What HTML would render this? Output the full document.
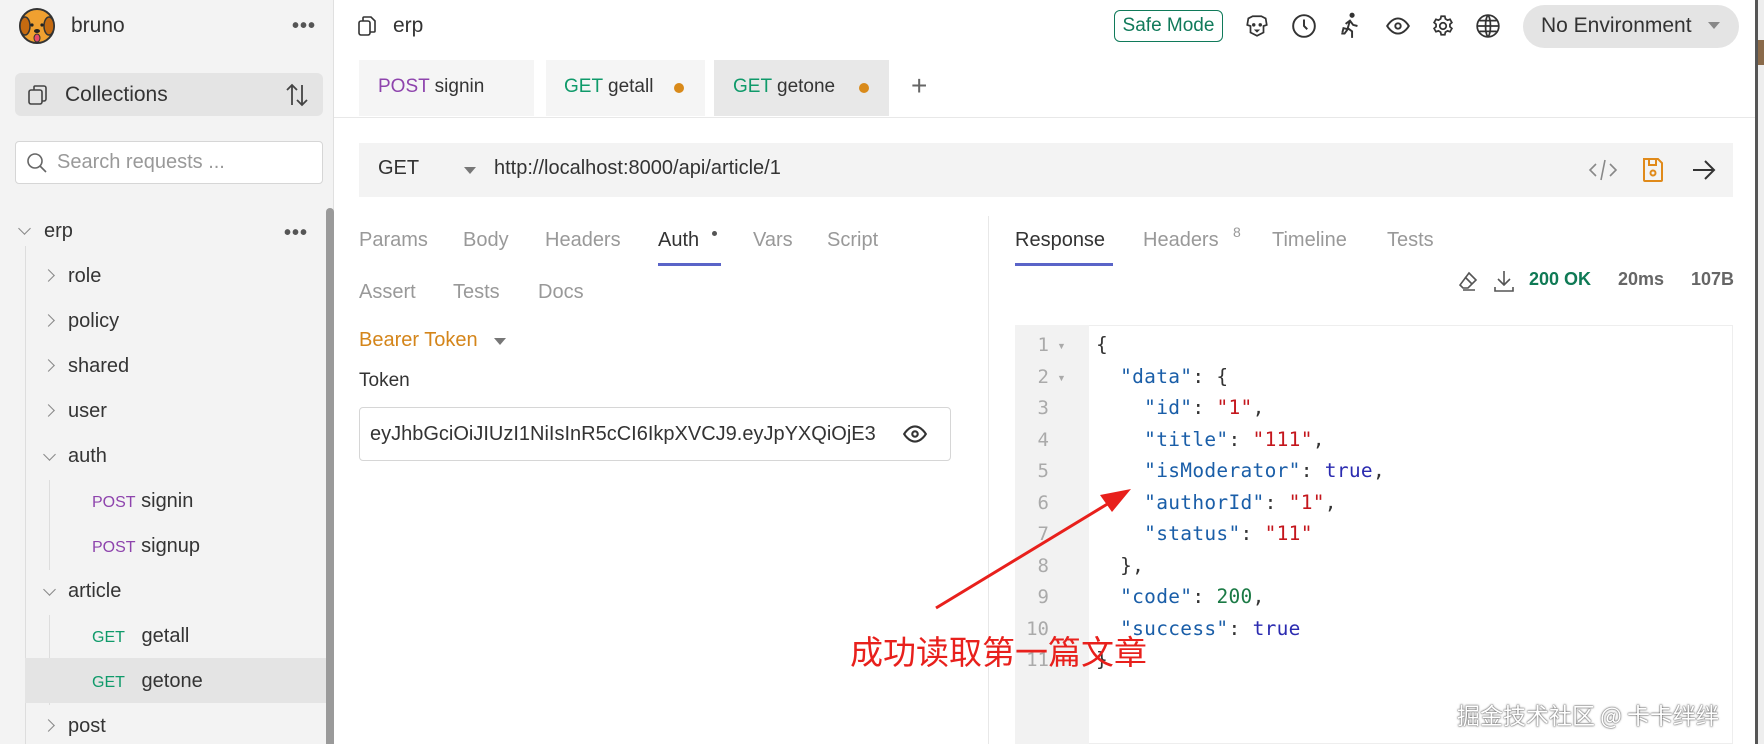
<!DOCTYPE html>
<html><head><meta charset="utf-8"><style>
*{box-sizing:border-box;margin:0;padding:0}
body{width:1764px;height:744px;overflow:hidden;background:#fff;font-family:"Liberation Sans","Noto Sans CJK SC",sans-serif;color:#343434;position:relative}
.a{position:absolute;white-space:nowrap}
.sb{position:absolute;left:0;top:0;width:334px;height:744px;background:#f3f3f3;border-right:1px solid #e0e0e0}
.row{position:absolute;font-size:20px;line-height:24px}
.chev{position:absolute;width:9px;height:9px;border-right:1.5px solid #888;border-bottom:1.5px solid #888}
.post{color:#8e44ad;font-size:16px}
.get{color:#0f9a6a;font-size:16px}
.tab{font-size:20px;color:#999;line-height:24px}
.ic{position:absolute}
.cl{position:absolute;left:1096px;font-family:"DejaVu Sans Mono","Liberation Mono",monospace;font-size:19.5px;line-height:24px;color:#333;letter-spacing:0.3px;white-space:pre;z-index:2}
.k{color:#1a5ea8}.s{color:#c4161c}.b{color:#2b2bb0}.n{color:#1b7a45}
.ln{position:absolute;left:1025px;width:24px;text-align:right;font-family:"DejaVu Sans Mono",monospace;font-size:19px;line-height:24px;color:#aaa;z-index:2}
</style></head><body>
<div class="sb"></div>
<svg class="ic" style="left:17px;top:6px" width="40" height="40" viewBox="0 0 40 40"><circle cx="20" cy="20" r="17" fill="#f0a030" stroke="#333" stroke-width="2"/><ellipse cx="8" cy="20" rx="5" ry="9" fill="#c56a10" stroke="#333" stroke-width="1.5"/><ellipse cx="32" cy="20" rx="5" ry="9" fill="#c56a10" stroke="#333" stroke-width="1.5"/><circle cx="15" cy="19" r="1.6" fill="#222"/><circle cx="25" cy="19" r="1.6" fill="#222"/><ellipse cx="20" cy="25" rx="3" ry="2" fill="#222"/><ellipse cx="20" cy="32" rx="3" ry="4" fill="#e84a6a" stroke="#333" stroke-width="1"/></svg>
<div class="a" style="left:71px;top:14px;font-size:21px">bruno</div>
<div class="a" style="left:292px;top:15px;font-size:20px;letter-spacing:1px;color:#555;font-weight:bold">•••</div>
<div class="a" style="left:15px;top:73px;width:308px;height:43px;background:#e4e4e4;border-radius:6px"></div>
<svg class="ic" style="left:26px;top:83px" width="24" height="24" viewBox="0 0 24 24" fill="none" stroke="#444" stroke-width="1.6"><rect x="3" y="7" width="13" height="14" rx="2"/><path d="M8 7V4a1 1 0 0 1 1-1h9a2 2 0 0 1 2 2v11a2 2 0 0 1-2 2h-2"/></svg>
<div class="a" style="left:65px;top:83px;font-size:21px">Collections</div>
<svg class="ic" style="left:285px;top:82px" width="24" height="26" viewBox="0 0 24 26" fill="none" stroke="#444" stroke-width="1.8"><path d="M7 23V3M2 8l5-5 5 5M17 3v20M12 18l5 5 5-5"/></svg>
<div class="a" style="left:15px;top:141px;width:308px;height:43px;background:#fff;border:1px solid #d6d6d6;border-radius:4px"></div>
<svg class="ic" style="left:26px;top:152px" width="22" height="22" viewBox="0 0 22 22" fill="none" stroke="#666" stroke-width="1.6"><circle cx="9" cy="9" r="7"/><path d="M14 14l6 6"/></svg>
<div class="a" style="left:57px;top:151px;font-size:20px;color:#999">Search requests ...</div>
<div class="chev" style="left:20px;top:224px;transform:rotate(45deg)"></div>
<div class="row" style="left:44px;top:219px">erp</div>
<div class="a" style="left:284px;top:222px;font-size:20px;letter-spacing:1px;color:#555;font-weight:bold">•••</div>
<div class="a" style="left:25px;top:246px;width:1px;height:498px;background:#ddd"></div>
<div class="a" style="left:49px;top:480px;width:1px;height:90px;background:#ddd"></div>
<div class="a" style="left:49px;top:615px;width:1px;height:90px;background:#ddd"></div>
<div class="a" style="left:25px;top:658px;width:301px;height:45px;background:#e4e4e4"></div>
<div class="chev" style="left:44px;top:271px;transform:rotate(-45deg)"></div><div class="row" style="left:68px;top:264px">role</div>
<div class="chev" style="left:44px;top:316px;transform:rotate(-45deg)"></div><div class="row" style="left:68px;top:309px">policy</div>
<div class="chev" style="left:44px;top:361px;transform:rotate(-45deg)"></div><div class="row" style="left:68px;top:354px">shared</div>
<div class="chev" style="left:44px;top:406px;transform:rotate(-45deg)"></div><div class="row" style="left:68px;top:399px">user</div>
<div class="chev" style="left:45px;top:450px;transform:rotate(45deg)"></div><div class="row" style="left:68px;top:444px">auth</div>
<div class="row" style="left:92px;top:489px"><span class="post">POST</span> signin</div>
<div class="row" style="left:92px;top:534px"><span class="post">POST</span> signup</div>
<div class="chev" style="left:45px;top:585px;transform:rotate(45deg)"></div><div class="row" style="left:68px;top:579px">article</div>
<div class="row" style="left:92px;top:624px"><span class="get">GET</span>&nbsp;&nbsp; getall</div>
<div class="row" style="left:92px;top:669px"><span class="get">GET</span>&nbsp;&nbsp; getone</div>
<div class="chev" style="left:44px;top:721px;transform:rotate(-45deg)"></div><div class="row" style="left:68px;top:714px">post</div>
<div class="a" style="left:326px;top:208px;width:8px;height:536px;background:#9a9a9a;border-radius:4px 4px 0 0"></div>
<svg class="ic" style="left:356px;top:14px" width="22" height="24" viewBox="0 0 22 24" fill="none" stroke="#333" stroke-width="1.6"><rect x="3" y="7" width="11" height="14" rx="2"/><path d="M7 7V4a1 1 0 0 1 1-1h7l4 4v10a1 1 0 0 1-1 1h-4"/></svg>
<div class="a" style="left:393px;top:14px;font-size:21px;color:#333">erp</div>
<div class="a" style="left:1114px;top:10px;width:109px;height:32px;border:1.5px solid #107a5a;border-radius:6px;color:#107a5a;font-size:19px;line-height:29px;text-align:center">Safe Mode</div>
<svg class="ic" style="left:1244px;top:13px" width="26" height="26" viewBox="0 0 24 24" fill="none" stroke="#333" stroke-width="1.6"><path d="M4 5l4-2h8l4 2 1 6-3 1v6l-6 3-6-3v-6l-3-1z"/><circle cx="9" cy="11" r=".8" fill="#333"/><circle cx="15" cy="11" r=".8" fill="#333"/><path d="M11 16h2l-1 1z"/></svg>
<svg class="ic" style="left:1291px;top:13px" width="26" height="26" viewBox="0 0 24 24" fill="none" stroke="#333" stroke-width="1.8"><circle cx="12" cy="12" r="10"/><path d="M12 6v6l3 3"/></svg>
<svg class="ic" style="left:1338px;top:12px" width="26" height="28" viewBox="0 0 24 26" fill="none" stroke="#333" stroke-width="1.8"><circle cx="13" cy="3" r="1.5" fill="#333"/><path d="M4 19l1-4 4 1M7 11l4-3 3 4 4 1M11 8l-2 7 4 3v6M9 16l-3 4H3"/></svg>
<svg class="ic" style="left:1385px;top:13px" width="26" height="26" viewBox="0 0 24 24" fill="none" stroke="#333" stroke-width="1.8"><path d="M2 12s4-7 10-7 10 7 10 7-4 7-10 7S2 12 2 12z"/><circle cx="12" cy="12" r="2.5"/></svg>
<svg class="ic" style="left:1430px;top:13px" width="26" height="26" viewBox="0 0 24 24" fill="none" stroke="#333" stroke-width="1.6"><circle cx="12" cy="12" r="3"/><path d="M10.3 3h3.4l.5 2.4 2 1.2 2.3-.8 1.7 3-1.8 1.6v2.3l1.8 1.6-1.7 3-2.3-.8-2 1.2-.5 2.4h-3.4l-.5-2.4-2-1.2-2.3.8-1.7-3 1.8-1.6v-2.3L3.8 8.8l1.7-3 2.3.8 2-1.2z"/></svg>
<svg class="ic" style="left:1475px;top:13px" width="26" height="26" viewBox="0 0 24 24" fill="none" stroke="#333" stroke-width="1.6"><circle cx="12" cy="12" r="10"/><path d="M2 12h20M12 2c-3 3-3 17 0 20M12 2c3 3 3 17 0 20M4 7h16M4 17h16"/></svg>
<div class="a" style="left:1523px;top:5px;width:216px;height:43px;background:#e4e4e4;border-radius:22px"></div>
<div class="a" style="left:1541px;top:14px;font-size:21px;color:#333">No Environment</div>
<div class="a" style="left:1708px;top:22px;width:0;height:0;border-left:6px solid transparent;border-right:6px solid transparent;border-top:7px solid #888"></div>
<div class="a" style="left:359px;top:60px;width:175px;height:56px;background:#f5f5f5"></div>
<div class="a" style="left:546px;top:60px;width:159px;height:56px;background:#f5f5f5"></div>
<div class="a" style="left:714px;top:60px;width:175px;height:56px;background:#e8e8e8"></div>
<div class="a" style="left:378px;top:76px;font-size:19px"><span style="color:#8e44ad">POST</span> signin</div>
<div class="a" style="left:564px;top:76px;font-size:19px"><span style="color:#0f9a6a">GET</span> getall</div>
<div class="a" style="left:674px;top:83px;width:10px;height:10px;border-radius:5px;background:#d98a1a"></div>
<div class="a" style="left:733px;top:76px;font-size:19px"><span style="color:#0f9a6a">GET</span> getone</div>
<div class="a" style="left:859px;top:83px;width:10px;height:10px;border-radius:5px;background:#d98a1a"></div>
<div class="a" style="left:911px;top:70px;font-size:28px;color:#666;font-weight:300">+</div>
<div class="a" style="left:334px;top:117px;width:1421px;height:1px;background:#e8e8e8"></div>
<div class="a" style="left:359px;top:143px;width:1374px;height:54px;background:#f3f3f3"></div>
<div class="a" style="left:378px;top:157px;font-size:20px;color:#333">GET</div>
<div class="a" style="left:464px;top:167px;border-left:6px solid transparent;border-right:6px solid transparent;border-top:7px solid #777"></div>
<div class="a" style="left:494px;top:157px;font-size:20px;color:#333">http://localhost:8000/api/article/1</div>
<svg class="ic" style="left:1588px;top:157px" width="30" height="26" viewBox="0 0 30 26" fill="none" stroke="#888" stroke-width="1.6"><path d="M8 7l-6 6 6 6M22 7l6 6-6 6M17 3l-4 20"/></svg>
<svg class="ic" style="left:1641px;top:156px" width="24" height="28" viewBox="0 0 24 28" fill="none" stroke="#e08a1a" stroke-width="2"><path d="M3 3h14l4 4v17a1 1 0 0 1-1 1H4a1 1 0 0 1-1-1z"/><path d="M8 3v6h7V3"/><circle cx="12" cy="17" r="2.5"/></svg>
<svg class="ic" style="left:1691px;top:158px" width="26" height="24" viewBox="0 0 26 24" fill="none" stroke="#333" stroke-width="2"><path d="M2 12h21M14 3l9 9-9 9"/></svg>
<div class="a tab" style="left:359px;top:228px">Params</div>
<div class="a tab" style="left:463px;top:228px">Body</div>
<div class="a tab" style="left:545px;top:228px">Headers</div>
<div class="a tab" style="left:658px;top:228px;color:#333">Auth</div>
<div class="a" style="left:712px;top:231px;width:5px;height:5px;border-radius:3px;background:#555"></div>
<div class="a" style="left:658px;top:263px;width:63px;height:3px;background:#5a64c8"></div>
<div class="a tab" style="left:753px;top:228px">Vars</div>
<div class="a tab" style="left:827px;top:228px">Script</div>
<div class="a tab" style="left:359px;top:280px">Assert</div>
<div class="a tab" style="left:453px;top:280px">Tests</div>
<div class="a tab" style="left:538px;top:280px">Docs</div>
<div class="a" style="left:359px;top:329px;font-size:20px;color:#d4851a">Bearer Token</div>
<div class="a" style="left:494px;top:338px;border-left:6px solid transparent;border-right:6px solid transparent;border-top:7px solid #777"></div>
<div class="a" style="left:359px;top:370px;font-size:19px;color:#333">Token</div>
<div class="a" style="left:359px;top:407px;width:592px;height:54px;border:1px solid #d6d6d6;border-radius:4px;background:#fff"></div>
<div class="a" style="left:370px;top:423px;font-size:20px;color:#333;width:522px;overflow:hidden">eyJhbGciOiJIUzI1NiIsInR5cCI6IkpXVCJ9.eyJpYXQiOjE3</div>
<svg class="ic" style="left:901px;top:421px" width="28" height="26" viewBox="0 0 24 24" fill="none" stroke="#333" stroke-width="2"><path d="M2 12s4-7 10-7 10 7 10 7-4 7-10 7S2 12 2 12z"/><circle cx="12" cy="12" r="2.5"/></svg>
<div class="a" style="left:988px;top:216px;width:1px;height:528px;background:#e8e8e8"></div>
<div class="a tab" style="left:1015px;top:228px;color:#333">Response</div>
<div class="a" style="left:1015px;top:263px;width:98px;height:3px;background:#5a64c8"></div>
<div class="a tab" style="left:1143px;top:228px">Headers</div>
<div class="a" style="left:1233px;top:224px;font-size:14px;color:#999">8</div>
<div class="a tab" style="left:1272px;top:228px">Timeline</div>
<div class="a tab" style="left:1387px;top:228px">Tests</div>
<svg class="ic" style="left:1457px;top:270px" width="22" height="22" viewBox="0 0 22 22" fill="none" stroke="#555" stroke-width="1.6"><path d="M12 3l7 7-8 8H6l-3-3z"/><path d="M8 7l7 7M6 20h12"/></svg>
<svg class="ic" style="left:1493px;top:269px" width="22" height="24" viewBox="0 0 22 24" fill="none" stroke="#555" stroke-width="1.6"><path d="M11 2v14M5 10l6 6 6-6M2 18v4h18v-4"/></svg>
<div class="a" style="left:1529px;top:269px;font-size:18px;color:#0f7a55;font-weight:bold">200 OK</div>
<div class="a" style="left:1618px;top:269px;font-size:18px;color:#666;font-weight:bold">20ms</div>
<div class="a" style="left:1691px;top:269px;font-size:18px;color:#666;font-weight:bold">107B</div>
<div class="a" style="left:1015px;top:325px;width:718px;height:419px;border:1px solid #eee;background:#fff"></div>
<div class="a" style="left:1015px;top:325px;width:74px;height:419px;background:#f2f2f2"></div>
<div class="ln" style="top:333px">1</div><div class="ln" style="top:365px">2</div><div class="ln" style="top:396px">3</div><div class="ln" style="top:428px">4</div><div class="ln" style="top:459px">5</div><div class="ln" style="top:491px">6</div><div class="ln" style="top:522px">7</div><div class="ln" style="top:554px">8</div><div class="ln" style="top:585px">9</div><div class="ln" style="top:617px">10</div><div class="ln" style="top:648px">11</div>
<div class="a" style="left:1057px;top:341px;font-size:9px;color:#aaa">▼</div>
<div class="a" style="left:1057px;top:373px;font-size:9px;color:#aaa">▼</div>
<div class="cl" style="top:333px">{</div>
<div class="cl" style="top:365px">  <span class="k">"data"</span>: {</div>
<div class="cl" style="top:396px">    <span class="k">"id"</span>: <span class="s">"1"</span>,</div>
<div class="cl" style="top:428px">    <span class="k">"title"</span>: <span class="s">"111"</span>,</div>
<div class="cl" style="top:459px">    <span class="k">"isModerator"</span>: <span class="b">true</span>,</div>
<div class="cl" style="top:491px">    <span class="k">"authorId"</span>: <span class="s">"1"</span>,</div>
<div class="cl" style="top:522px">    <span class="k">"status"</span>: <span class="s">"11"</span></div>
<div class="cl" style="top:554px">  },</div>
<div class="cl" style="top:585px">  <span class="k">"code"</span>: <span class="n">200</span>,</div>
<div class="cl" style="top:617px">  <span class="k">"success"</span>: <span class="b">true</span></div>
<div class="cl" style="top:648px">}</div>
<svg class="ic" style="left:0;top:0;z-index:3" width="1764" height="744"><path d="M936 608L1114 500" stroke="#e8201c" stroke-width="3"/><polygon points="1131,489 1100,495 1112,512" fill="#e8201c"/></svg>
<div class="a" style="left:850px;top:630px;font-size:33px;line-height:40px;color:#e8201c;font-family:'Noto Sans CJK SC',sans-serif;z-index:3">成功读取第一篇文章</div>
<div class="a" style="left:1457px;top:697px;font-size:23px;color:#fff;text-shadow:0 0 2px #555,0 0 1px #333;font-family:'Noto Sans CJK SC',sans-serif;z-index:3">掘金技术社区 @ 卡卡绊绊</div>
<div class="a" style="left:1755px;top:0;width:3px;height:744px;background:#555"></div>
<div class="a" style="left:1758px;top:0;width:6px;height:744px;background:#eee"></div>
<div class="a" style="left:1758px;top:40px;width:6px;height:25px;background:#8a6a4a"></div>
</body></html>
